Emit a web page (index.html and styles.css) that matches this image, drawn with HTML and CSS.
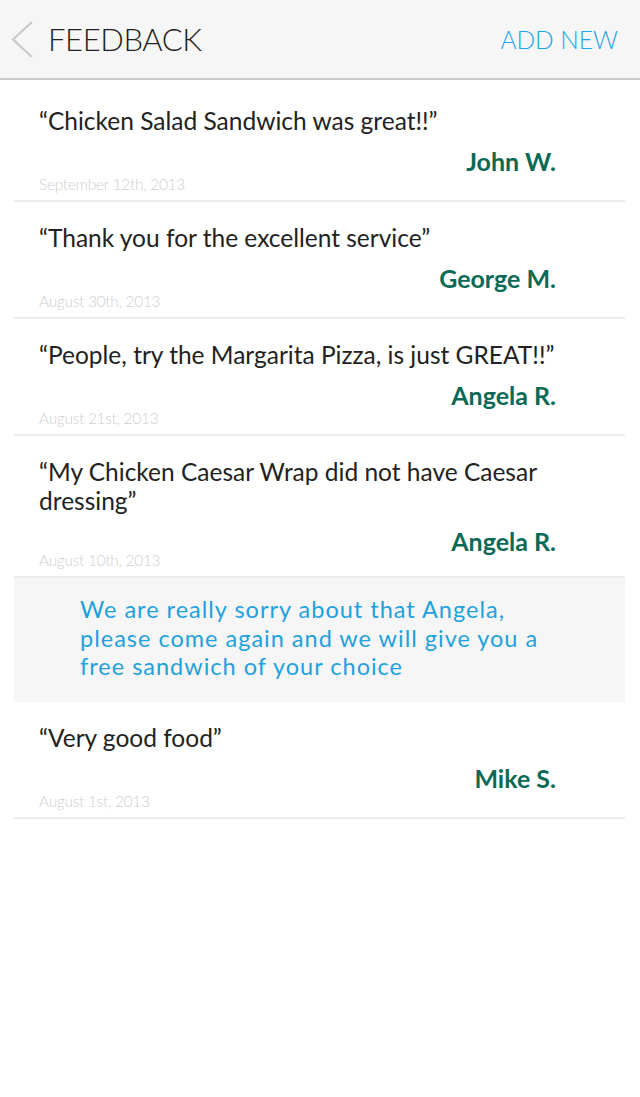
FILE: index.html
```html
<!DOCTYPE html>
<html lang="en">
<head>
<meta charset="utf-8">
<title>Feedback</title>
<link rel="stylesheet" href="styles.css">
</head>
<body>
<header class="topbar">
  <div class="topbar-left">
    <svg class="back" width="24" height="40" viewBox="0 0 24 40" aria-hidden="true">
      <polyline points="21,2 2,19.5 21,37" fill="none" stroke="#c9c9c9" stroke-width="2.2" stroke-linejoin="miter"/>
    </svg>
    <h1 class="title">FEEDBACK</h1>
  </div>
  <a class="add" href="#">ADD NEW</a>
</header>

<main class="list">
  <article class="item">
    <p class="quote">“Chicken Salad Sandwich was great!!”</p>
    <p class="name">John W.</p>
    <p class="date">September 12th, 2013</p>
  </article>
  <article class="item">
    <p class="quote">“Thank you for the excellent service”</p>
    <p class="name">George M.</p>
    <p class="date">August 30th, 2013</p>
  </article>
  <article class="item">
    <p class="quote">“People, try the Margarita Pizza, is just GREAT!!”</p>
    <p class="name">Angela R.</p>
    <p class="date">August 21st, 2013</p>
  </article>
  <article class="item item-tight">
    <p class="quote">“My Chicken Caesar Wrap did not have Caesar dressing”</p>
    <p class="name">Angela R.</p>
    <p class="date">August 10th, 2013</p>
  </article>
  <div class="reply">
    We are really sorry about that Angela,<br>
    please come again and we will give you a<br>
    free sandwich of your choice
  </div>
  <article class="item">
    <p class="quote">“Very good food”</p>
    <p class="name">Mike S.</p>
    <p class="date">August 1st, 2013</p>
  </article>
</main>
</body>
</html>
```

FILE: styles.css
```css
html, body {
  margin: 0;
  padding: 0;
  background: #ffffff;
}

body {
  width: 640px;
  min-height: 1097px;
  font-family: "Lato", "Open Sans", "Liberation Sans", sans-serif;
}

p {
  margin: 0;
}

.topbar {
  height: 78px;
  background: #f6f6f6;
  border-bottom: 2px solid #c9c9c9;
  display: flex;
  align-items: center;
  justify-content: space-between;
  padding: 0 22px 0 11px;
  box-sizing: content-box;
}

.topbar-left {
  display: flex;
  align-items: center;
  gap: 13px;
}

.back {
  display: block;
  margin-top: 1px;
}

.title {
  margin: 0;
  font-size: 31px;
  font-weight: 300;
  color: #222222;
  letter-spacing: -0.4px;
  line-height: 1;
}

.add {
  font-size: 24.5px;
  font-weight: 300;
  color: #1ea5e3;
  text-decoration: none;
  line-height: 1;
  margin-top: 2px;
}

.list {
  margin: 0 15px 0 14px;
  padding-top: 5px;
}

.item {
  padding: 21px 25px 6px 25px;
  border-bottom: 2px solid #ececec;
}

.quote {
  font-size: 24.5px;
  line-height: 29px;
  color: #222222;
  letter-spacing: 0;
}

.name {
  margin: 12px 44px 0 0;
  text-align: right;
  font-size: 25px;
  line-height: 29px;
  font-weight: 700;
  color: #0b6a55;
}

.date {
  margin-top: -2px;
  font-size: 15.5px;
  line-height: 20px;
  font-weight: 300;
  color: #cfcfcf;
  letter-spacing: -0.3px;
}

.item-tight .date {
  margin-top: -6px;
}

.reply {
  background: #f6f6f6;
  padding: 17px 40px 21px 66px;
  font-size: 23.5px;
  line-height: 28.5px;
  color: #1ea1dd;
  letter-spacing: 1px;
  white-space: nowrap;
}
```
